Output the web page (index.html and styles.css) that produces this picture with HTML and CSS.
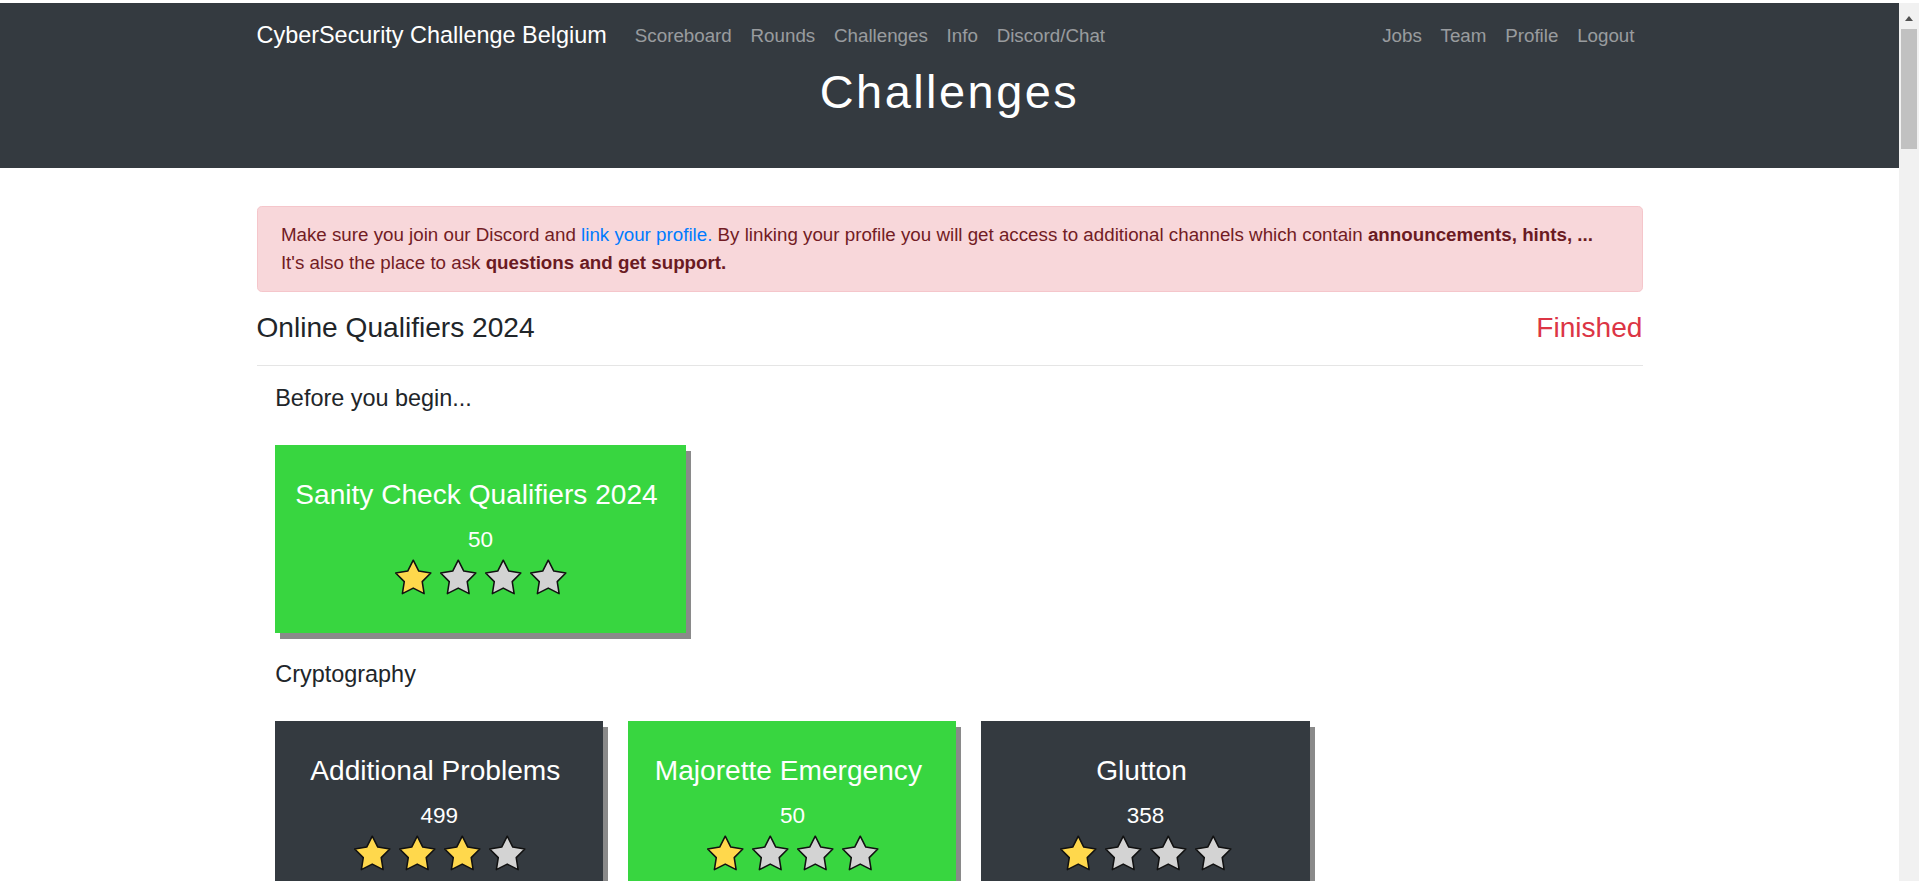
FILE: index.html
```html
<!DOCTYPE html>
<html lang="en">
<head>
<meta charset="utf-8">
<title>Challenges - CyberSecurity Challenge Belgium</title>
<link rel="stylesheet" href="styles.css">
</head>
<body>
<div class="fake-scrollbar" aria-hidden="true">
  <span class="fake-arrow"></span>
  <span class="fake-thumb"></span>
</div>

<header class="site-header">
  <div class="container">
    <nav class="navbar">
      <a class="brand" href="#">CyberSecurity Challenge Belgium</a>
      <ul class="nav nav-left">
        <li><a href="#">Scoreboard</a></li>
        <li><a href="#">Rounds</a></li>
        <li><a href="#">Challenges</a></li>
        <li><a href="#">Info</a></li>
        <li><a href="#">Discord/Chat</a></li>
      </ul>
      <ul class="nav nav-right">
        <li><a href="#">Jobs</a></li>
        <li><a href="#">Team</a></li>
        <li><a href="#">Profile</a></li>
        <li><a href="#">Logout</a></li>
      </ul>
    </nav>
    <h1 class="page-title">Challenges</h1>
  </div>
</header>

<main class="container main">
  <div class="alert">
    Make sure you join our Discord and <a href="#" class="alert-link">link your profile.</a> By linking your profile you will get access to additional channels which contain <b>announcements, hints, ...</b><br>
    It's also the place to ask <b>questions and get support.</b>
  </div>

  <section class="round">
    <div class="round-head">
      <h4 class="round-title">Online Qualifiers 2024</h4>
      <span class="round-status">Finished</span>
    </div>
    <hr class="divider">

    <div class="category">
      <h5 class="category-title">Before you begin...</h5>
      <div class="card-row">
        <div class="card card-solved">
          <div class="card-title">Sanity Check Qualifiers 2024</div>
          <div class="card-points">50</div>
          <div class="stars">
            <svg class="star on" viewBox="0 0 40 37.5"><polygon points="20,1 25.76,12.27 38.26,14.27 29.32,23.23 31.29,35.73 20,30 8.71,35.73 10.68,23.23 1.74,14.27 14.24,12.27"/></svg>
            <svg class="star" viewBox="0 0 40 37.5"><polygon points="20,1 25.76,12.27 38.26,14.27 29.32,23.23 31.29,35.73 20,30 8.71,35.73 10.68,23.23 1.74,14.27 14.24,12.27"/></svg>
            <svg class="star" viewBox="0 0 40 37.5"><polygon points="20,1 25.76,12.27 38.26,14.27 29.32,23.23 31.29,35.73 20,30 8.71,35.73 10.68,23.23 1.74,14.27 14.24,12.27"/></svg>
            <svg class="star" viewBox="0 0 40 37.5"><polygon points="20,1 25.76,12.27 38.26,14.27 29.32,23.23 31.29,35.73 20,30 8.71,35.73 10.68,23.23 1.74,14.27 14.24,12.27"/></svg>
          </div>
        </div>
      </div>
    </div>

    <div class="category">
      <h5 class="category-title">Cryptography</h5>
      <div class="card-row">
        <div class="card card-open">
          <div class="card-title">Additional Problems</div>
          <div class="card-points">499</div>
          <div class="stars">
            <svg class="star on" viewBox="0 0 40 37.5"><polygon points="20,1 25.76,12.27 38.26,14.27 29.32,23.23 31.29,35.73 20,30 8.71,35.73 10.68,23.23 1.74,14.27 14.24,12.27"/></svg>
            <svg class="star on" viewBox="0 0 40 37.5"><polygon points="20,1 25.76,12.27 38.26,14.27 29.32,23.23 31.29,35.73 20,30 8.71,35.73 10.68,23.23 1.74,14.27 14.24,12.27"/></svg>
            <svg class="star on" viewBox="0 0 40 37.5"><polygon points="20,1 25.76,12.27 38.26,14.27 29.32,23.23 31.29,35.73 20,30 8.71,35.73 10.68,23.23 1.74,14.27 14.24,12.27"/></svg>
            <svg class="star" viewBox="0 0 40 37.5"><polygon points="20,1 25.76,12.27 38.26,14.27 29.32,23.23 31.29,35.73 20,30 8.71,35.73 10.68,23.23 1.74,14.27 14.24,12.27"/></svg>
          </div>
        </div>
        <div class="card card-solved">
          <div class="card-title">Majorette Emergency</div>
          <div class="card-points">50</div>
          <div class="stars">
            <svg class="star on" viewBox="0 0 40 37.5"><polygon points="20,1 25.76,12.27 38.26,14.27 29.32,23.23 31.29,35.73 20,30 8.71,35.73 10.68,23.23 1.74,14.27 14.24,12.27"/></svg>
            <svg class="star" viewBox="0 0 40 37.5"><polygon points="20,1 25.76,12.27 38.26,14.27 29.32,23.23 31.29,35.73 20,30 8.71,35.73 10.68,23.23 1.74,14.27 14.24,12.27"/></svg>
            <svg class="star" viewBox="0 0 40 37.5"><polygon points="20,1 25.76,12.27 38.26,14.27 29.32,23.23 31.29,35.73 20,30 8.71,35.73 10.68,23.23 1.74,14.27 14.24,12.27"/></svg>
            <svg class="star" viewBox="0 0 40 37.5"><polygon points="20,1 25.76,12.27 38.26,14.27 29.32,23.23 31.29,35.73 20,30 8.71,35.73 10.68,23.23 1.74,14.27 14.24,12.27"/></svg>
          </div>
        </div>
        <div class="card card-open">
          <div class="card-title">Glutton</div>
          <div class="card-points">358</div>
          <div class="stars">
            <svg class="star on" viewBox="0 0 40 37.5"><polygon points="20,1 25.76,12.27 38.26,14.27 29.32,23.23 31.29,35.73 20,30 8.71,35.73 10.68,23.23 1.74,14.27 14.24,12.27"/></svg>
            <svg class="star" viewBox="0 0 40 37.5"><polygon points="20,1 25.76,12.27 38.26,14.27 29.32,23.23 31.29,35.73 20,30 8.71,35.73 10.68,23.23 1.74,14.27 14.24,12.27"/></svg>
            <svg class="star" viewBox="0 0 40 37.5"><polygon points="20,1 25.76,12.27 38.26,14.27 29.32,23.23 31.29,35.73 20,30 8.71,35.73 10.68,23.23 1.74,14.27 14.24,12.27"/></svg>
            <svg class="star" viewBox="0 0 40 37.5"><polygon points="20,1 25.76,12.27 38.26,14.27 29.32,23.23 31.29,35.73 20,30 8.71,35.73 10.68,23.23 1.74,14.27 14.24,12.27"/></svg>
          </div>
        </div>
      </div>
    </div>
  </section>
</main>
</body>
</html>
```

FILE: styles.css
```css
html {
  font-size: 18.75px;
}

body {
  margin: 0;
  padding: 3px 20px 0 0;
  background: #ffffff;
  color: #212529;
  font-family: "Liberation Sans", Arial, Helvetica, sans-serif;
  font-size: 1rem;
  line-height: 1.5;
}

a {
  text-decoration: none;
}

.container {
  max-width: 1386px;
  margin: 0 auto;
}

/* ---------- window scrollbar (part of the captured frame) ---------- */
.fake-scrollbar {
  position: fixed;
  top: 3px;
  right: 0;
  bottom: 0;
  width: 20px;
  background: #f1f1f1;
}

.fake-arrow {
  position: absolute;
  top: 13px;
  left: 6px;
  width: 0;
  height: 0;
  border-left: 4px solid transparent;
  border-right: 4px solid transparent;
  border-bottom: 5px solid #505050;
}

.fake-thumb {
  position: absolute;
  top: 26px;
  left: 2px;
  width: 16px;
  height: 120px;
  background: #c1c1c1;
}

/* ---------- header ---------- */
.site-header {
  background: #343a40;
  padding-bottom: 52.6px;
}

.navbar {
  display: flex;
  align-items: center;
  padding: 9.4px 0;
}

.brand {
  color: #ffffff;
  font-size: 1.25rem;
  line-height: 35px;
  padding: 5.86px 0;
  margin-right: 18.75px;
  white-space: nowrap;
}

.nav {
  display: flex;
  list-style: none;
  margin: 0;
  padding: 0;
}

.nav-right {
  margin-left: auto;
}

.nav a {
  display: block;
  color: rgba(255, 255, 255, 0.5);
  padding: 9.4px 9.4px;
  line-height: 28.1px;
}

.nav-right li:last-child a {
  padding-right: 8px;
}

.page-title {
  margin: 0;
  text-align: center;
  color: #ffffff;
  font-weight: 400;
  font-size: 46.9px;
  line-height: 1;
  letter-spacing: 2.5px;
}

/* ---------- main ---------- */
.main {
  padding-top: 37.5px;
}

.alert {
  background: #f8d7da;
  border: 1px solid #f5c6cb;
  color: #721c24;
  border-radius: 4.7px;
  padding: 14px 23.4px;
  margin-bottom: 18.75px;
}

.alert-link {
  color: #007bff;
}

.alert b {
  font-weight: 700;
  color: #6a1a22;
}

.round-head {
  display: flex;
  justify-content: space-between;
  align-items: baseline;
  font-size: 1.5rem;
  line-height: 1.2;
}

.round-title {
  margin: 0;
  font-size: 1.5rem;
  font-weight: 400;
}

.round-status {
  color: #dc3545;
}

.divider {
  border: 0;
  border-top: 1px solid rgba(0, 0, 0, 0.1);
  margin: 20.5px 0 18px;
}

.category {
  padding-left: 18.75px;
}

.category-title {
  margin: 0 0 33px;
  font-size: 1.25rem;
  font-weight: 400;
  line-height: 28.1px;
}

.card-row {
  display: flex;
  gap: 25px;
  margin-bottom: 27.3px;
}

.card {
  box-sizing: border-box;
  min-width: 328.1px;
  padding: 33px 20px 37.5px;
  color: #ffffff;
  text-align: center;
  box-shadow: 5px 6px 0 #8a8a8a;
}

.card-solved {
  background: #38d640;
}

.card-open {
  background: #343a40;
}

.card-title {
  font-size: 1.5rem;
  line-height: 33.75px;
  white-space: nowrap;
  padding-right: 8px;
  margin-bottom: 12.5px;
}

.card-points {
  font-size: 1.2rem;
  line-height: 32px;
}

.stars {
  display: flex;
  justify-content: center;
  gap: 6.5px;
  margin-top: 2.5px;
}

.star {
  display: block;
  width: 38.5px;
  height: 36.6px;
}

.star polygon {
  fill: #d3d3d3;
  stroke: #111111;
  stroke-width: 1.6;
  stroke-linejoin: round;
}

.star.on polygon {
  fill: #ffd84c;
}
```
